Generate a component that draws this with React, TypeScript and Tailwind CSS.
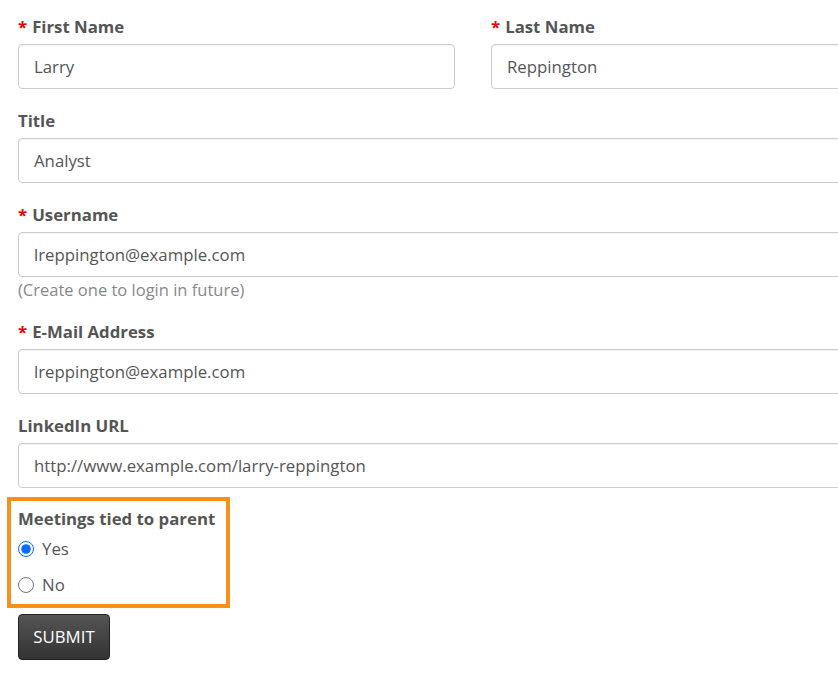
import React, { useState } from 'react';

const font = { fontFamily: '"Open Sans", "Liberation Sans", sans-serif' };

const Label: React.FC<{ text: string; required?: boolean }> = ({ text, required }) => (
  <label className="block text-[16.8px] leading-[24px] font-bold text-[#555] mb-[5px]">
    {required && <span className="text-[#e00] mr-[5px]">*</span>}
    {text}
  </label>
);

const Input: React.FC<{ value: string; onChange: (v: string) => void }> = ({ value, onChange }) => (
  <input
    type="text"
    value={value}
    onChange={(e) => onChange(e.target.value)}
    className="block w-full h-[45px] px-[15px] border border-[#ccc] rounded-[4px] text-[16.8px] text-[#555] bg-white shadow-[inset_0_1px_1px_rgba(0,0,0,0.05)] focus:outline-none"
  />
);

const App: React.FC = () => {
  const [form, setForm] = useState({
    firstName: 'Larry',
    lastName: 'Reppington',
    title: 'Analyst',
    username: 'lreppington@example.com',
    email: 'lreppington@example.com',
    linkedin: 'http://www.example.com/larry-reppington',
  });
  const [tied, setTied] = useState('yes');

  const set = (name: string) => (v: string) => setForm((prev) => ({ ...prev, [name]: v }));

  return (
    <div className="w-full min-h-screen overflow-hidden bg-white" style={font}>
      <form className="w-[930px] pl-[18px] pt-[15px]" onSubmit={(e) => e.preventDefault()}>
        <div className="flex gap-[36px]">
          <div className="w-[437px]">
            <Label text="First Name" required />
            <Input value={form.firstName} onChange={set('firstName')} />
          </div>
          <div className="w-[437px]">
            <Label text="Last Name" required />
            <Input value={form.lastName} onChange={set('lastName')} />
          </div>
        </div>

        <div className="mt-[20px]">
          <Label text="Title" />
          <Input value={form.title} onChange={set('title')} />
        </div>

        <div className="mt-[20px]">
          <Label text="Username" required />
          <Input value={form.username} onChange={set('username')} />
          <p className="text-[16.5px] leading-[24px] text-[#888] mt-[1px]">(Create one to login in future)</p>
        </div>

        <div className="mt-[18px]">
          <Label text="E-Mail Address" required />
          <Input value={form.email} onChange={set('email')} />
        </div>

        <div className="mt-[20px]">
          <Label text="LinkedIn URL" />
          <Input value={form.linkedin} onChange={set('linkedin')} />
        </div>

        {/* highlighted radio group */}
        <div className="ml-[-11px] mt-[9px] w-[223px] border-[4px] border-[#f8901c] pl-[7px] pt-[6px] pb-[1px]">
          <div className="text-[16.8px] leading-[24px] font-bold text-[#555]">Meetings tied to parent</div>
          <label className="flex items-center h-[36px] text-[16.8px] text-[#555]">
            <input
              type="radio"
              name="tied"
              checked={tied === 'yes'}
              onChange={() => setTied('yes')}
              className="w-[16px] h-[16px] m-0 mr-[8px] accent-[#0a6cff]"
            />
            Yes
          </label>
          <label className="flex items-center h-[36px] text-[16.8px] text-[#555]">
            <input
              type="radio"
              name="tied"
              checked={tied === 'no'}
              onChange={() => setTied('no')}
              className="w-[16px] h-[16px] m-0 mr-[8px] accent-[#0a6cff]"
            />
            No
          </label>
        </div>

        <button
          type="submit"
          className="mt-[6px] w-[92px] h-[46px] rounded-[4px] border border-[#222] bg-gradient-to-b from-[#555] to-[#333] text-white text-[16.8px]"
        >
          SUBMIT
        </button>
      </form>
    </div>
  );
};

export default App;
